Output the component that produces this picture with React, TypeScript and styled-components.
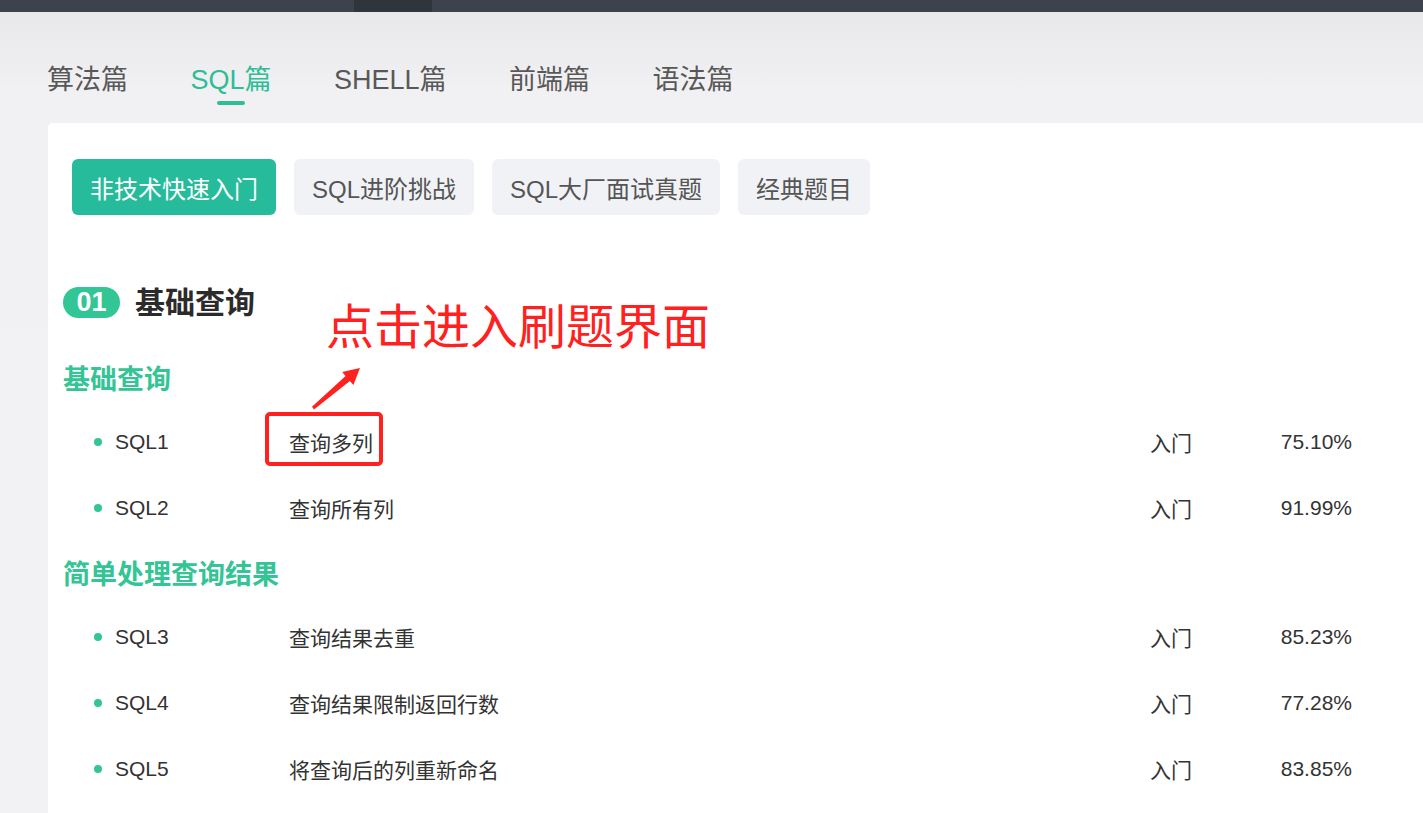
import React from 'react';
import styled, { createGlobalStyle } from 'styled-components';

const GlobalStyle = createGlobalStyle`
  * {
    margin: 0;
    padding: 0;
    box-sizing: border-box;
  }
  body {
    font-family: "Liberation Sans", "Noto Sans CJK SC", sans-serif;
    background: #f2f2f4;
    overflow: hidden;
  }
`;

const Page = styled.div`
  width: 1423px;
  height: 813px;
  display: flex;
  flex-direction: column;
  background: linear-gradient(180deg, #e8e8eb 12px, #f1f1f3 90px, #f2f2f4 100%);
`;

const TopBar = styled.div`
  height: 12px;
  flex-shrink: 0;
  background: #3d434c;
  display: flex;
`;

const TopBarSpacer = styled.div`
  width: 354px;
`;

const TopBarActive = styled.div`
  width: 78px;
  background: #30343b;
`;

const Nav = styled.nav`
  height: 111px;
  flex-shrink: 0;
  display: flex;
  gap: 62.5px;
  padding: 54px 0 0 47px;
`;

const NavItem = styled.div<{ $active?: boolean }>`
  display: flex;
  flex-direction: column;
  align-items: center;
  font-size: 27px;
  line-height: 28px;
  color: ${(p) => (p.$active ? '#2ebd97' : '#585858')};
`;

const NavUnderline = styled.span`
  margin-top: 7px;
  width: 28px;
  height: 4px;
  border-radius: 2px;
  background: #2ebd97;
`;

const Card = styled.main`
  position: relative;
  flex: 1;
  margin-left: 48px;
  background: #ffffff;
  border-top-left-radius: 5px;
  padding: 36px 0 0 15px;
`;

const ChipRow = styled.div`
  display: flex;
  gap: 18px;
  padding-left: 9px;
`;

const Chip = styled.button<{ $active?: boolean }>`
  height: 56px;
  padding: 0 18px;
  border: none;
  border-radius: 6px;
  font-family: inherit;
  font-size: 24px;
  background: ${(p) => (p.$active ? '#26bb9b' : '#f1f2f6')};
  color: ${(p) => (p.$active ? '#ffffff' : '#555555')};
`;

const SectionTitle = styled.div`
  margin-top: 72px;
  height: 31px;
  display: flex;
  align-items: center;
  gap: 15px;
`;

const Badge = styled.span`
  width: 57px;
  height: 31px;
  border-radius: 16px;
  background: #32c595;
  color: #ffffff;
  font-weight: 700;
  font-size: 27px;
  line-height: 31px;
  text-align: center;
`;

const SectionName = styled.h2`
  font-size: 30px;
  font-weight: 700;
  color: #2b2b2b;
  line-height: 31px;
`;

const GroupTitle = styled.h3<{ $first?: boolean }>`
  margin-top: ${(p) => (p.$first ? '28px' : '0')};
  height: 63px;
  display: flex;
  align-items: center;
  font-size: 27px;
  font-weight: 700;
  color: #34c495;
`;

const Row = styled.div`
  height: 66px;
  display: grid;
  grid-template-columns: 21px 174px 861px 110px 92px;
  align-items: center;
  margin-left: 31px;
  font-size: 21px;
  color: #333333;
`;

const Dot = styled.span`
  width: 8px;
  height: 8px;
  border-radius: 50%;
  background: #32c595;
`;

const Rate = styled.span`
  text-align: right;
`;

const Callout = styled.div`
  position: absolute;
  left: 278px;
  top: 176px;
  font-size: 48px;
  line-height: 48px;
  color: #ff2020;
  font-family: "Noto Sans CJK SC", sans-serif;
  white-space: nowrap;
`;

const CalloutArrow = styled.svg`
  position: absolute;
  left: 252px;
  top: 232px;
`;

const Highlight = styled.div`
  position: absolute;
  left: 217px;
  top: 289px;
  width: 118px;
  height: 54px;
  border: 4px solid #ff2020;
  border-radius: 5px;
`;

const groups = [
  {
    title: '基础查询',
    items: [
      { id: 'SQL1', name: '查询多列', level: '入门', rate: '75.10%' },
      { id: 'SQL2', name: '查询所有列', level: '入门', rate: '91.99%' },
    ],
  },
  {
    title: '简单处理查询结果',
    items: [
      { id: 'SQL3', name: '查询结果去重', level: '入门', rate: '85.23%' },
      { id: 'SQL4', name: '查询结果限制返回行数', level: '入门', rate: '77.28%' },
      { id: 'SQL5', name: '将查询后的列重新命名', level: '入门', rate: '83.85%' },
    ],
  },
];

const tabs = ['算法篇', 'SQL篇', 'SHELL篇', '前端篇', '语法篇'];
const chips = ['非技术快速入门', 'SQL进阶挑战', 'SQL大厂面试真题', '经典题目'];

export default function App() {
  return (
    <>
      <GlobalStyle />
      <Page>
        <TopBar>
          <TopBarSpacer />
          <TopBarActive />
        </TopBar>
        <Nav>
          {tabs.map((t) => (
            <NavItem key={t} $active={t === 'SQL篇'}>
              {t}
              {t === 'SQL篇' && <NavUnderline />}
            </NavItem>
          ))}
        </Nav>
        <Card>
          <ChipRow>
            {chips.map((c, i) => (
              <Chip key={c} $active={i === 0}>
                {c}
              </Chip>
            ))}
          </ChipRow>
          <SectionTitle>
            <Badge>01</Badge>
            <SectionName>基础查询</SectionName>
          </SectionTitle>
          {groups.map((g, gi) => (
            <div key={g.title}>
              <GroupTitle $first={gi === 0}>{g.title}</GroupTitle>
              {g.items.map((it) => (
                <Row key={it.id}>
                  <Dot />
                  <span>{it.id}</span>
                  <span>{it.name}</span>
                  <span>{it.level}</span>
                  <Rate>{it.rate}</Rate>
                </Row>
              ))}
            </div>
          ))}

          {/* annotation drawn on top of the screenshot */}
          <Callout>点击进入刷题界面</Callout>
          <CalloutArrow width="70" height="60" viewBox="0 0 70 60">
            <polygon
              fill="#ff2020"
              points="14,54.4 49.9,25.9 53.4,29.9 60,13 42.2,17 45.6,21 12,51.8"
            />
          </CalloutArrow>
          <Highlight />
        </Card>
      </Page>
    </>
  );
}
